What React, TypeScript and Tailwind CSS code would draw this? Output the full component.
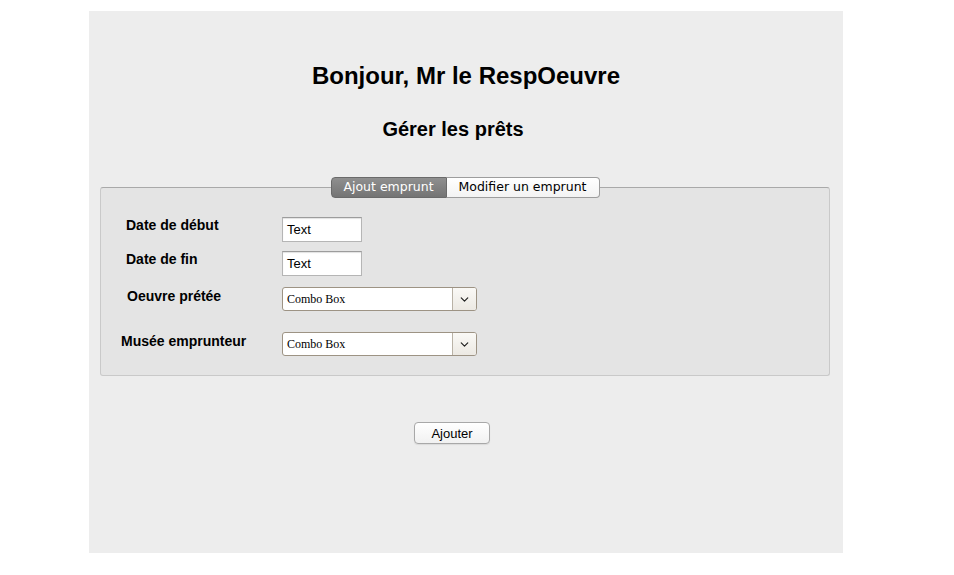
import { ChevronDown } from 'lucide-react'

const labelCls = "text-[14px] font-bold leading-4 text-black"

function TextField() {
  return (
    <div className="flex h-[25px] w-[80px] items-center border border-[#b5b5b5] border-t-[#9c9c9c] bg-white pl-[4px] text-[13px] text-black shadow-[inset_0_1px_1px_rgba(0,0,0,0.12)]">
      Text
    </div>
  )
}

function ComboBox() {
  return (
    <div className="flex h-[24px] w-[195px] overflow-hidden rounded-[3px] border border-[#9d9384] bg-white">
      <div className="flex flex-1 items-center pl-[4px] font-['Liberation_Serif',serif] text-[12px] text-black">
        Combo Box
      </div>
      <div className="flex w-[24px] items-center justify-center border-l border-[#b9b2a6] bg-gradient-to-b from-[#faf9f6] to-[#ece9e3]">
        <ChevronDown className="h-[13px] w-[13px] text-[#222]" strokeWidth={2.25} />
      </div>
    </div>
  )
}

export default function App() {
  return (
    <div className="min-h-[575px] w-[954px] bg-white pt-[11px] font-['Liberation_Sans',Arial,sans-serif]">
      <div className="ml-[89px] flex h-[542px] w-[754px] flex-col bg-[#ededed]">
        <h1 className="mt-[51px] text-center text-[24px] font-bold leading-[28px] text-black">
          Bonjour, Mr le RespOeuvre
        </h1>
        <h2 className="mt-[27px] pr-[26px] text-center text-[20px] font-bold leading-6 text-black">
          Gérer les prêts
        </h2>

        <div className="ml-[11px] mr-[13px] mt-[36px] flex flex-col">
          <div className="relative z-10 flex justify-center font-['DejaVu_Sans',sans-serif] text-[12.5px] leading-none">
            <div className="flex h-[21px] w-[116px] items-center justify-center rounded-l-[4px] border border-[#6a6a6a] bg-gradient-to-b from-[#8f8f8f] to-[#747474] text-white">
              Ajout emprunt
            </div>
            <div className="flex h-[21px] w-[153px] items-center justify-center rounded-r-[4px] border border-l-0 border-[#9d9d9d] bg-gradient-to-b from-white to-[#f3f3f3] text-black">
              Modifier un emprunt
            </div>
          </div>

          <div className="-mt-[11px] flex h-[189px] flex-col rounded-[3px] border border-[#c9c9c9] border-t-[#a9a9a9] bg-[#e4e4e4] pt-[29px]">
            <div className="flex items-start">
              <div className={`w-[181px] pl-[25px] ${labelCls}`}>Date de début</div>
              <TextField />
            </div>
            <div className="mt-[9px] flex items-start">
              <div className={`w-[181px] pl-[25px] ${labelCls}`}>Date de fin</div>
              <TextField />
            </div>
            <div className="mt-[11px] flex items-start">
              <div className={`w-[181px] pl-[26px] pt-[1px] ${labelCls}`}>Oeuvre prétée</div>
              <ComboBox />
            </div>
            <div className="mt-[21px] flex items-start">
              <div className={`w-[181px] pl-[20px] pt-[1px] ${labelCls}`}>Musée emprunteur</div>
              <ComboBox />
            </div>
          </div>
        </div>

        <div className="mt-[46px] flex justify-center pr-[28px]">
          <button className="h-[22px] w-[76px] rounded-[4px] border border-[#a8a8a8] bg-gradient-to-b from-white to-[#f1f1f1] text-[13px] leading-none text-black shadow-[0_1px_1px_rgba(0,0,0,0.08)]">
            Ajouter
          </button>
        </div>
      </div>
    </div>
  )
}
